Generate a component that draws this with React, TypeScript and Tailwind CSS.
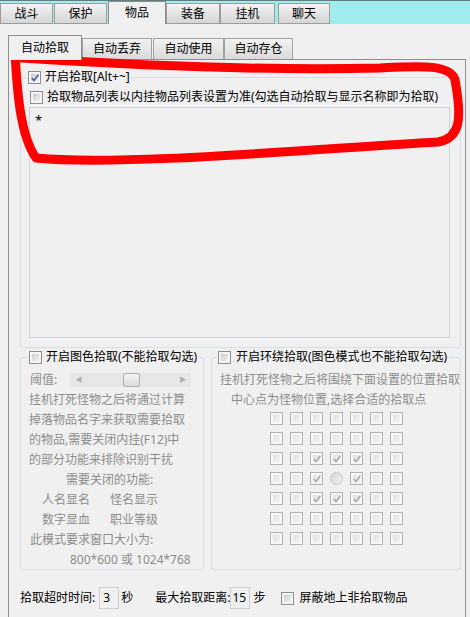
import React from 'react';

const Box: React.FC<{ checked?: boolean; disabled?: boolean }> = ({ checked, disabled }) => (
  <span
    className={`relative inline-flex w-[13px] h-[13px] shrink-0 p-[2px] border ${
      disabled ? 'border-[#b3b3b3] bg-[#f7f7f7]' : 'border-[#8e8f8f] bg-[#f4f4f4]'
    }`}
  >
    <span
      className={`block w-full h-full bg-gradient-to-br ${
        disabled ? 'from-[#e4e2e3] to-[#f3f2f3]' : 'from-[#c9ccd0] to-[#f0f0f0]'
      }`}
    />
    {checked && (
      <svg className="absolute left-[1px] top-[1px]" width="10" height="10" viewBox="0 0 10 10">
        <path
          d="M1.8 5 L4 7.6 L8.4 1.8"
          fill="none"
          stroke={disabled ? '#a7a7a7' : '#3b5591'}
          strokeWidth="1.5"
        />
      </svg>
    )}
  </span>
);

const Radio = () => (
  <span className="inline-block w-[13px] h-[13px] rounded-full border border-[#c4c4c4] bg-gradient-to-br from-[#d9d9d9] to-[#eeeeee]" />
);

const outerTabs = [
  { label: '战斗', w: 'w-[53px]' },
  { label: '保护', w: 'w-[53px] ml-px' },
  { label: '物品', w: 'w-[58px] ml-px', active: true },
  { label: '装备', w: 'w-[54px]' },
  { label: '挂机', w: 'w-[55px]' },
  { label: '聊天', w: 'w-[52px] ml-[3px]' },
];

const innerTabs = [
  { label: '自动拾取', w: 'w-[74px]', active: true },
  { label: '自动丢弃', w: 'w-[70px]' },
  { label: '自动使用', w: 'w-[71px] ml-px' },
  { label: '自动存仓', w: 'w-[69px]' },
];

// 7x7 pick grid: 1 = checked, 2 = centre (monster)
const grid = [
  [0, 0, 0, 0, 0, 0, 0],
  [0, 0, 0, 0, 0, 0, 0],
  [0, 0, 1, 1, 1, 0, 0],
  [0, 0, 1, 2, 1, 0, 0],
  [0, 0, 1, 1, 1, 0, 0],
  [0, 0, 0, 0, 0, 0, 0],
  [0, 0, 0, 0, 0, 0, 0],
];

export default function App() {
  return (
    <div className="relative w-[470px] h-[617px] overflow-hidden bg-[#f0f0f0] text-[12px] leading-[14px] text-black font-['Noto_Sans','Noto_Sans_CJK_SC',sans-serif]">
      {/* Top tab strip */}
      <div className="flex h-[24px] items-end bg-[#9eecec] border-t border-[#5f7f7f]">
        {outerTabs.map((t) =>
          t.active ? (
            <div
              key={t.label}
              className={`${t.w} h-[23px] flex items-center justify-center bg-[#f0f0f0] border border-b-0 border-[#8c8c8c]`}
            >
              {t.label}
            </div>
          ) : (
            <div
              key={t.label}
              className={`${t.w} h-[21px] flex items-center justify-center border border-[#9c9c9c] bg-gradient-to-b from-[#f3f3f3] to-[#d6d6d6]`}
            >
              {t.label}
            </div>
          )
        )}
      </div>

      {/* Inner tab control */}
      <div className="pl-[8px] pt-[11px]">
        <div className="flex items-end h-[24px]">
          {innerTabs.map((t) =>
            t.active ? (
              <div
                key={t.label}
                className={`${t.w} h-[25px] -mb-px relative z-10 flex items-center justify-center bg-[#f0f0f0] border border-b-0 border-[#8d8f94]`}
              >
                {t.label}
              </div>
            ) : (
              <div
                key={t.label}
                className={`${t.w} h-[21px] flex items-center justify-center border border-b-0 border-[#a3a3a3] bg-gradient-to-b from-[#f2f2f2] to-[#dadada]`}
              >
                {t.label}
              </div>
            )
          )}
        </div>

        <div className="w-[458px] h-[560px] border border-[#8d8f94] pl-[11px] pt-[10px]">
          {/* Pick group */}
          <fieldset className="w-[441px] h-[278px] border border-[#d5dfe5] rounded-[3px]">
            <legend className="ml-[5px] px-[2px] flex items-center">
              <Box checked />
              <span className="ml-[4px]">开启拾取[Alt+~]</span>
            </legend>
            <div className="mt-[6px] ml-[9px] flex items-center">
              <Box />
              <span className="ml-[4px]">拾取物品列表以内挂物品列表设置为准(勾选自动拾取与显示名称即为拾取)</span>
            </div>
            <div className="mt-[3px] ml-[8px] w-[421px] h-[231px] border border-[#cdd3d8] pl-[5px] pt-[5px] text-[13px]">
              *
            </div>
          </fieldset>

          <div className="mt-[2px] flex gap-[7px]">
            {/* Image pick group */}
            <fieldset className="w-[184px] h-[220px] border border-[#d5dfe5] rounded-[3px]">
              <legend className="ml-[6px] px-[2px] flex items-center">
                <Box />
                <span className="ml-[4px]">开启图色拾取(不能拾取勾选)</span>
              </legend>
              <div className="mt-[6px] leading-[20px] text-[#8d8d8d]">
                <div className="h-[20px] pl-[9px] flex items-center">
                  <span>阈值:</span>
                  <div className="ml-[13px] w-[121px] h-[14px] bg-[#e7e7e7] relative flex items-center justify-between px-[5px] text-[7px] text-[#b0b0b0]">
                    <span>◀</span>
                    <span>▶</span>
                    <span className="absolute left-[53px] top-0 w-[17px] h-[14px] border border-[#adadad] rounded-[2px] bg-gradient-to-b from-[#f4f4f4] to-[#dcdcdc]" />
                  </div>
                </div>
                <div className="h-[20px] pl-[8px]">挂机打死怪物之后将通过计算</div>
                <div className="h-[20px] pl-[8px]">掉落物品名字来获取需要拾取</div>
                <div className="h-[20px] pl-[8px]">的物品,需要关闭内挂(F12)中</div>
                <div className="h-[20px] pl-[8px]">的部分功能来排除识别干扰</div>
                <div className="h-[20px] pl-[45px]">需要关闭的功能:</div>
                <div className="h-[20px] pl-[21px] flex">
                  <span>人名显名</span>
                  <span className="ml-[20px]">怪名显示</span>
                </div>
                <div className="h-[20px] pl-[21px] flex">
                  <span>数字显血</span>
                  <span className="ml-[20px]">职业等级</span>
                </div>
                <div className="h-[20px] pl-[9px]">此模式要求窗口大小为:</div>
                <div className="h-[20px] pl-[49px]">800*600 或 1024*768</div>
              </div>
            </fieldset>

            {/* Surround pick group */}
            <fieldset className="w-[250px] h-[220px] border border-[#d5dfe5] rounded-[3px]">
              <legend className="ml-[4px] px-[2px] flex items-center">
                <Box />
                <span className="ml-[5px]">开启环绕拾取(图色模式也不能拾取勾选)</span>
              </legend>
              <div className="mt-[6px] leading-[20px] text-[#8d8d8d]">
                <div className="h-[20px] pl-[8px] whitespace-nowrap">挂机打死怪物之后将围绕下面设置的位置拾取</div>
                <div className="h-[20px] pl-[19px]">中心点为怪物位置,选择合适的拾取点</div>
              </div>
              <div className="mt-[2px] ml-[58px] grid grid-cols-7 gap-[7px] w-fit">
                {grid.flatMap((row, r) =>
                  row.map((v, c) =>
                    v === 2 ? <Radio key={`${r}-${c}`} /> : <Box key={`${r}-${c}`} disabled checked={v === 1} />
                  )
                )}
              </div>
            </fieldset>
          </div>

          {/* Bottom options */}
          <div className="mt-[17px] h-[22px] flex items-center">
            <span>拾取超时时间:</span>
            <span className="ml-[4px] w-[20px] h-[22px] border border-[#cfcfcf] flex items-center pl-[3px]">3</span>
            <span className="ml-[2px]">秒</span>
            <span className="ml-[22px]">最大拾取距离:</span>
            <span className="w-[20px] h-[22px] border border-[#cfcfcf] flex items-center pl-[1px]">15</span>
            <span className="ml-[3px]">步</span>
            <span className="ml-[16px] flex items-center">
              <Box />
            </span>
            <span className="ml-[5px]">屏蔽地上非拾取物品</span>
          </div>
        </div>
      </div>

      {/* Red marker scribble drawn over the screenshot */}
      <svg className="absolute inset-0 pointer-events-none" width="470" height="617" viewBox="0 0 470 617">
        <path
          d="M15 52 C17 90, 20 135, 36 158 C120 166, 300 150, 438 142 C461 138, 462 118, 455 80 C451 64, 420 66, 380 68 C250 71, 100 63, 22 58"
          fill="none"
          stroke="#ff0000"
          strokeWidth="9"
          strokeLinecap="round"
          strokeLinejoin="round"
        />
      </svg>
    </div>
  );
}
